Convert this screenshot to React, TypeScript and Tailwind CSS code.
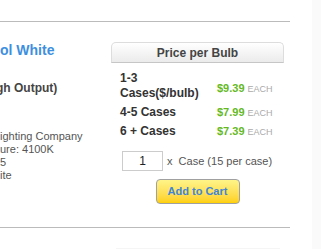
export default function App() {
  const prices = [
    { label: ["1-3", "Cases($/bulb)"], price: "$9.39" },
    { label: ["4-5 Cases"], price: "$7.99" },
    { label: ["6 + Cases"], price: "$7.39" },
  ];

  return (
    <div className="flex h-[249px] w-[321px] overflow-hidden bg-white font-['Liberation_Sans',Arial,sans-serif]">
      <div className="w-[312px] shrink-0 pt-[21px]">
        <div className="w-[290px] border-t border-[#bbbbbb]" />
        <div className="flex h-[182px]">
          {/* product details, cut off at the left edge */}
          <div className="w-[111px] shrink-0 whitespace-nowrap">
            <div className="mt-[19px] text-[14px] font-bold leading-[18px] text-[#3d8fe0]">ol White</div>
            <div className="ml-[-4px] mt-[21px] text-[12px] font-bold leading-[16px] text-[#444444]">gh Output)</div>
            <div className="mt-[34px] text-[11px] leading-[13px] text-[#555555]">
              <div>ighting Company</div>
              <div>ure: 4100K</div>
              <div>5</div>
              <div>ite</div>
            </div>
          </div>

          {/* pricing */}
          <div className="w-[173px] shrink-0">
            <div className="mt-[20px] flex h-[21px] items-center justify-center rounded-t-[5px] border border-b-[#c6c6c6] border-[#dddddd] bg-gradient-to-b from-[#ffffff] to-[#ebebeb] text-[12px] font-bold text-[#444444]">
              Price per Bulb
            </div>
            <div className="mt-[8px] flex flex-col gap-[4px] pl-[9px]">
              {prices.map((p) => (
                <div key={p.price} className={p.label.length > 1 ? "flex h-[30px] items-center" : "flex h-[15px] items-center"}>
                  <div className="w-[97px] text-[12px] font-bold leading-[15px] text-[#333333]">
                    {p.label.map((l) => (
                      <div key={l}>{l}</div>
                    ))}
                  </div>
                  <div className={p.label.length > 1 ? "mt-[5px] flex h-[15px] items-baseline whitespace-nowrap" : "flex h-[15px] items-baseline whitespace-nowrap"}>
                    <span className="text-[11px] font-bold leading-[15px] text-[#66b91f]">{p.price}</span>
                    <span className="ml-[3px] text-[9px] leading-[15px] text-[#aaaaaa]">EACH</span>
                  </div>
                </div>
              ))}
            </div>
            <div className="ml-[11px] mt-[12px] flex h-[20px] items-center">
              <input
                defaultValue="1"
                className="h-[20px] w-[41px] border border-[#cccccc] p-0 text-center text-[12px] leading-[18px] text-[#222222] outline-none"
              />
              <span className="ml-[4px] whitespace-nowrap text-[11px] leading-[13px] text-[#555555]">x&nbsp; Case (15 per case)</span>
            </div>
            <div className="mt-[8px] flex justify-center">
              <button className="h-[25px] w-[84px] rounded-[4px] border border-[#a0a0a0] bg-gradient-to-b from-[#fff488] to-[#ffd000] p-0 text-[11px] font-bold leading-[23px] text-[#3f86d6]">
                Add to Cart
              </button>
            </div>
          </div>
        </div>
        <div className="mt-[23px] w-[290px] border-t border-[#bbbbbb]" />
        <div className="ml-[116px] mt-[20px] h-[1px] w-[164px] bg-[#f5f5f5]" />
      </div>
      <div className="flex-1 bg-[#fafafa]" />
    </div>
  );
}
